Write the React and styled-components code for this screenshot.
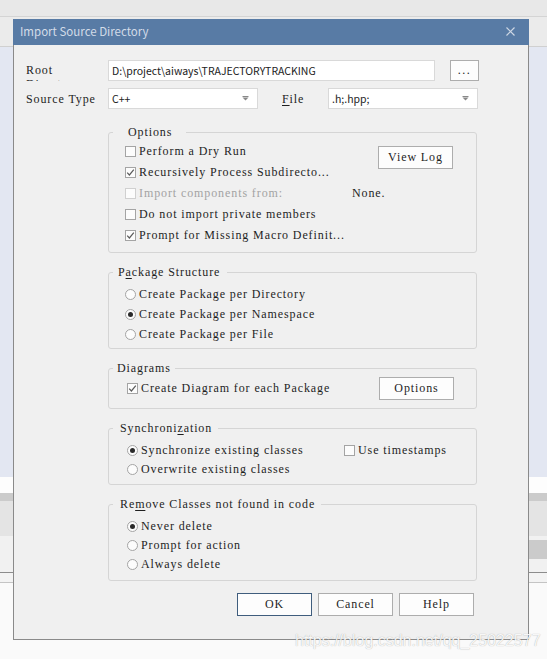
import React from 'react';
import styled, { createGlobalStyle } from 'styled-components';

const SONG = `"Liberation Serif", "DejaVu Serif", serif`;
const UI = `"Noto Sans CJK SC", "Liberation Sans", sans-serif`;

const GlobalStyle = createGlobalStyle`
  html, body { margin: 0; padding: 0; background: #fafafa; }
  * { box-sizing: border-box; }
`;

const Desktop = styled.div`
  position: relative;
  width: 547px;
  height: 659px;
  overflow: hidden;
  display: flex;
  flex-direction: column;
  background: #fafafa;
`;

const Band = styled.div`
  flex: none;
  height: ${p => p.$h}px;
  background: ${p => p.$bg};
  border-bottom: ${p => (p.$line ? `1px solid ${p.$line}` : 'none')};
  display: flex;
  justify-content: flex-end;
  align-items: flex-start;
`;

const SideStrip = styled.div`
  margin-top: 4px;
  width: 260px;
  height: 19px;
  background: #cbcbcb;
`;

const Dialog = styled.div`
  position: absolute;
  left: 13px;
  top: 19px;
  width: 516px;
  height: 621px;
  border: 1px solid #8a8a8a;
  border-top: none;
  background: #f0f0f0;
  display: flex;
  flex-direction: column;
  font-family: ${SONG};
  font-size: 12px;
  letter-spacing: 0.9px;
  color: #1e1e1e;
`;

const TitleBar = styled.div`
  height: 26px;
  margin: 0 -1px;
  padding: 0 14px 2px 7px;
  background: #587ba5;
  display: flex;
  align-items: center;
  justify-content: space-between;
`;

const Title = styled.span`
  font-family: ${UI};
  font-size: 11.5px;
  letter-spacing: 0;
  color: #d3dce8;
`;

const Body = styled.div`
  flex: 1;
  padding: 15px 0 0 12px;
  display: flex;
  flex-direction: column;
`;

const FieldRow = styled.div`
  display: flex;
  align-items: center;
  height: 21px;
  margin-top: ${p => p.$mt || 0}px;
`;

const Label = styled.div`
  flex: none;
  width: ${p => p.$w}px;
  margin-left: ${p => p.$ml || 0}px;
  line-height: 14px;
  white-space: nowrap;
`;

const ClipLabel = styled.div`
  flex: none;
  align-self: flex-start;
  width: 70px;
  margin: 3px 12px 0 0;
  height: 18px;
  overflow: hidden;
  line-height: 14px;
`;

const U = styled.span`
  text-decoration: underline;
  text-underline-offset: 2px;
`;

const TextBox = styled.div`
  flex: none;
  width: ${p => p.$w}px;
  height: 21px;
  border: 1px solid #d9d9d9;
  background: #fff;
  display: flex;
  align-items: center;
  justify-content: space-between;
  padding: 0 8px 0 3px;
  font-family: ${UI};
  font-size: 10.5px;
  letter-spacing: 0;
  color: #222;
  white-space: nowrap;
`;

const Arrow = () => (
  <svg width="7" height="5" viewBox="0 0 7 5">
    <rect x="0.5" y="0" width="6" height="1" fill="#888" />
    <path d="M0.5 1.5 H6.5 L3.5 4.5 Z" fill="#888" />
  </svg>
);

const Button = styled.button`
  flex: none;
  width: ${p => p.$w || 75}px;
  height: ${p => p.$h || 23}px;
  margin-left: ${p => p.$ml || 0}px;
  padding: 0;
  border: 1px solid ${p => (p.$primary ? '#3f5d7d' : '#adadad')};
  border-radius: 0;
  background: #fdfdfd;
  font-family: ${SONG};
  font-size: 12px;
  letter-spacing: ${p => p.$ls || '0.9px'};
  color: #1e1e1e;
`;

const Group = styled.div`
  position: relative;
  flex: none;
  width: 369px;
  margin: ${p => p.$mt}px 0 0 82px;
  border: 1px solid #d5d5d5;
  border-radius: 3px;
  padding: ${p => p.$pad};
`;

const Legend = styled.span`
  position: absolute;
  top: -8px;
  left: 4px;
  padding: 0 ${p => p.$pr}px 0 ${p => p.$pl}px;
  background: #f0f0f0;
  line-height: 14px;
  white-space: nowrap;
`;

const OptionsGrid = styled.div`
  display: grid;
  grid-template-columns: 227px 1fr;
  grid-auto-rows: 21px;
  align-items: center;
`;

const ListGrid = styled.div`
  display: grid;
  grid-template-columns: ${p => p.$cols || '1fr'};
  grid-auto-rows: ${p => p.$row}px;
  align-items: center;
`;

const Item = styled.div`
  display: flex;
  align-items: center;
  gap: 3px;
  white-space: nowrap;
  grid-column: ${p => p.$col || 'auto'};
  color: ${p => (p.$disabled ? '#a3a3a3' : 'inherit')};
`;

const Box = styled.span`
  flex: none;
  width: 11px;
  height: 11px;
  border: 1px solid ${p => (p.$disabled ? '#d0d0d0' : '#a4a4a4')};
  background: #fcfcfc;
  display: flex;
  align-items: center;
  justify-content: center;
`;

const Round = styled.span`
  flex: none;
  width: 11px;
  height: 11px;
  border: 1px solid #a4a4a4;
  border-radius: 50%;
  background: #fcfcfc;
  display: flex;
  align-items: center;
  justify-content: center;
  &::after {
    content: '';
    width: 5px;
    height: 5px;
    border-radius: 50%;
    background: ${p => (p.$on ? '#2a2a2a' : 'transparent')};
  }
`;

const ViewLog = styled(Button)`
  grid-column: 2;
  grid-row: 1 / span 2;
  align-self: start;
  margin: 5px 0 0 26px;
`;

const DiagramRow = styled.div`
  height: 23px;
  display: flex;
  align-items: center;
  justify-content: space-between;
`;

const ButtonBar = styled.div`
  display: flex;
  gap: 6px;
  margin: 12px 0 0 211px;
`;

const Watermark = styled.div`
  position: absolute;
  left: 295px;
  top: 632px;
  font-family: "Liberation Sans", Arial, sans-serif;
  font-size: 16px;
  line-height: 18px;
  color: rgba(255, 255, 255, 0.92);
  text-shadow: 0 0 1px rgba(0, 0, 0, 0.35);
  white-space: nowrap;
`;

const Check = ({ checked, disabled, children, col }) => (
  <Item $disabled={disabled} $col={col}>
    <Box $disabled={disabled}>
      {checked && (
        <svg width="9" height="9" viewBox="0 0 9 9">
          <polyline points="1.2,4.6 3.4,7 7.8,1.6" fill="none" stroke="#5a5a5a" strokeWidth="1.2" />
        </svg>
      )}
    </Box>
    <span>{children}</span>
  </Item>
);

const Radio = ({ on, children }) => (
  <Item>
    <Round $on={on} />
    <span>{children}</span>
  </Item>
);

export default function App() {
  return (
    <>
      <GlobalStyle />
      <Desktop>
        <Band $h={17} $bg="#e8e8e8" $line="#d4d4d4" />
        <Band $h={30} $bg="#ebebeb" $line="#d0d0d0" />
        <Band $h={430} $bg="#e3e7f2" />
        <Band $h={16} $bg="#fdfdfd" />
        <Band $h={8} $bg="#cbcbcb" />
        <Band $h={35} $bg="#e4e4e4" />
        <Band $h={36} $bg="#f1f1f1">
          <SideStrip />
        </Band>
        <Band $h={1} $bg="#8c8c8c" />
        <Band $h={10} $bg="#f3f3f3" $line="#c4c4c4" />

        <Dialog>
          <TitleBar>
            <Title>Import Source Directory</Title>
            <svg width="9" height="9" viewBox="0 0 9 9">
              <path d="M0.5 0.5 L8.5 8.5 M8.5 0.5 L0.5 8.5" stroke="#cdd7e4" strokeWidth="1.2" />
            </svg>
          </TitleBar>
          <Body>
            <FieldRow>
              <ClipLabel>Root Directory</ClipLabel>
              <TextBox $w={327}>D:\project\aiways\TRAJECTORYTRACKING</TextBox>
              <Button $w={29} $h={21} $ml={15} $ls="1.5px">...</Button>
            </FieldRow>
            <FieldRow $mt={7}>
              <Label $w={82}>Source Type</Label>
              <TextBox $w={150}>
                C++
                <Arrow />
              </TextBox>
              <Label $w={46} $ml={24}>
                <U>F</U>ile
              </Label>
              <TextBox $w={150}>
                .h;.hpp;
                <Arrow />
              </TextBox>
            </FieldRow>

            <Group $mt={23} $pad="8px 0 6px 16px">
              <Legend $pl={15} $pr={14}>Options</Legend>
              <OptionsGrid>
                <Check>Perform a Dry Run</Check>
                <ViewLog>View Log</ViewLog>
                <Check checked>Recursively Process Subdirecto...</Check>
                <Check disabled>Import components from:</Check>
                <span>None.</span>
                <Check col="1 / span 2">Do not import private members</Check>
                <Check checked col="1 / span 2">Prompt for Missing Macro Definit...</Check>
              </OptionsGrid>
            </Group>

            <Group $mt={19} $pad="11px 0 4px 16px">
              <Legend $pl={5} $pr={7}>
                P<U>a</U>ckage Structure
              </Legend>
              <ListGrid $row={20}>
                <Radio>Create Package per Directory</Radio>
                <Radio on>Create Package per Namespace</Radio>
                <Radio>Create Package per File</Radio>
              </ListGrid>
            </Group>

            <Group $mt={19} $pad="8px 22px 8px 18px">
              <Legend $pl={4} $pr={4}>Diagrams</Legend>
              <DiagramRow>
                <Check checked>Create Diagram for each Package</Check>
                <Button>Options</Button>
              </DiagramRow>
            </Group>

            <Group $mt={19} $pad="12px 0 5px 18px">
              <Legend $pl={7} $pr={6}>
                Synchroni<U>z</U>ation
              </Legend>
              <ListGrid $row={19} $cols="217px 1fr">
                <Radio on>Synchronize existing classes</Radio>
                <Check>Use timestamps</Check>
                <Radio>Overwrite existing classes</Radio>
              </ListGrid>
            </Group>

            <Group $mt={19} $pad="12px 0 6px 18px">
              <Legend $pl={7} $pr={6}>
                Re<U>m</U>ove Classes not found in code
              </Legend>
              <ListGrid $row={19}>
                <Radio on>Never delete</Radio>
                <Radio>Prompt for action</Radio>
                <Radio>Always delete</Radio>
              </ListGrid>
            </Group>

            <ButtonBar>
              <Button $primary>OK</Button>
              <Button>Cancel</Button>
              <Button>Help</Button>
            </ButtonBar>
          </Body>
        </Dialog>

        <Watermark>https://blog.csdn.net/qq_25022577</Watermark>
      </Desktop>
    </>
  );
}
